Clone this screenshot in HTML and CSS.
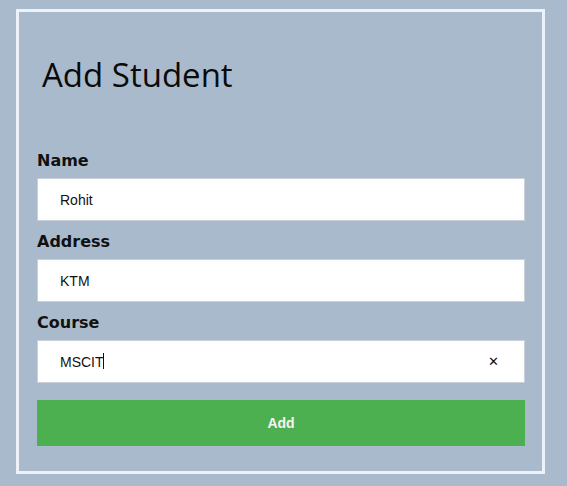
FILE: index.html
```html
<!DOCTYPE html>
<html lang="en">
<head>
  <meta charset="UTF-8">
  <title>Add Student</title>
  <link rel="stylesheet" href="styles.css">
</head>
<body>

  <div class="container">
    <h1 class="title">Add Student</h1>
    <form class="form" onsubmit="return false">
      <label for="name">Name</label>
      <input type="text" id="name" value="Rohit" />

      <label for="address">Address</label>
      <input type="text" id="address" value="KTM" />

      <label for="course">Course</label>
      <div class="field">
        <input type="text" id="course" value="MSCIT" />
        <span class="caret"></span>
        <span class="clear">&#x2715;</span>
      </div>

      <button type="submit">Add</button>
    </form>
  </div>

</body>
</html>
```

FILE: styles.css
```css
body {
  margin: 0;
  background: #aabacd;
  font-family: "Liberation Sans", Arial, sans-serif;
}

.container {
  margin: 9px 0 0 16px;
  height: 459px;
  border: 3px solid #eef2f8;
  padding: 0 17px 0 18px;
  width: 488px;
}

.title {
  margin: 44px 0 0 0;
  padding-left: 5px;
  font-family: "Open Sans", "Noto Sans", sans-serif;
  font-weight: normal;
  font-size: 33px;
  line-height: 38px;
  color: #0a0a0a;
}

.form {
  margin-top: 57px;
  display: flex;
  flex-direction: column;
}

label {
  font-family: "DejaVu Sans", sans-serif;
  font-weight: bold;
  font-size: 16px;
  line-height: 19px;
  color: #111;
}

input {
  display: block;
  width: 100%;
  height: 43px;
  box-sizing: border-box;
  margin: 8px 0 11px 0;
  padding: 0 22px;
  border: 1px solid #c9d0d8;
  background: #fff;
  font-family: "Liberation Sans", Arial, sans-serif;
  font-size: 14px;
  color: #111;
  outline: none;
}

.field {
  position: relative;
}

.field input {
  margin-bottom: 0;
}

.caret {
  position: absolute;
  left: 66px;
  top: 21px;
  width: 1px;
  height: 16px;
  background: #111;
}

.clear {
  position: absolute;
  right: 26px;
  top: 23px;
  line-height: 13px;
  font-size: 13px;
  color: #111;
}

button {
  margin-top: 17px;
  height: 46px;
  border: none;
  background: #4caf50;
  color: #f4f4f4;
  font-family: "Liberation Sans", Arial, sans-serif;
  font-weight: bold;
  font-size: 14px;
  cursor: pointer;
}
```
